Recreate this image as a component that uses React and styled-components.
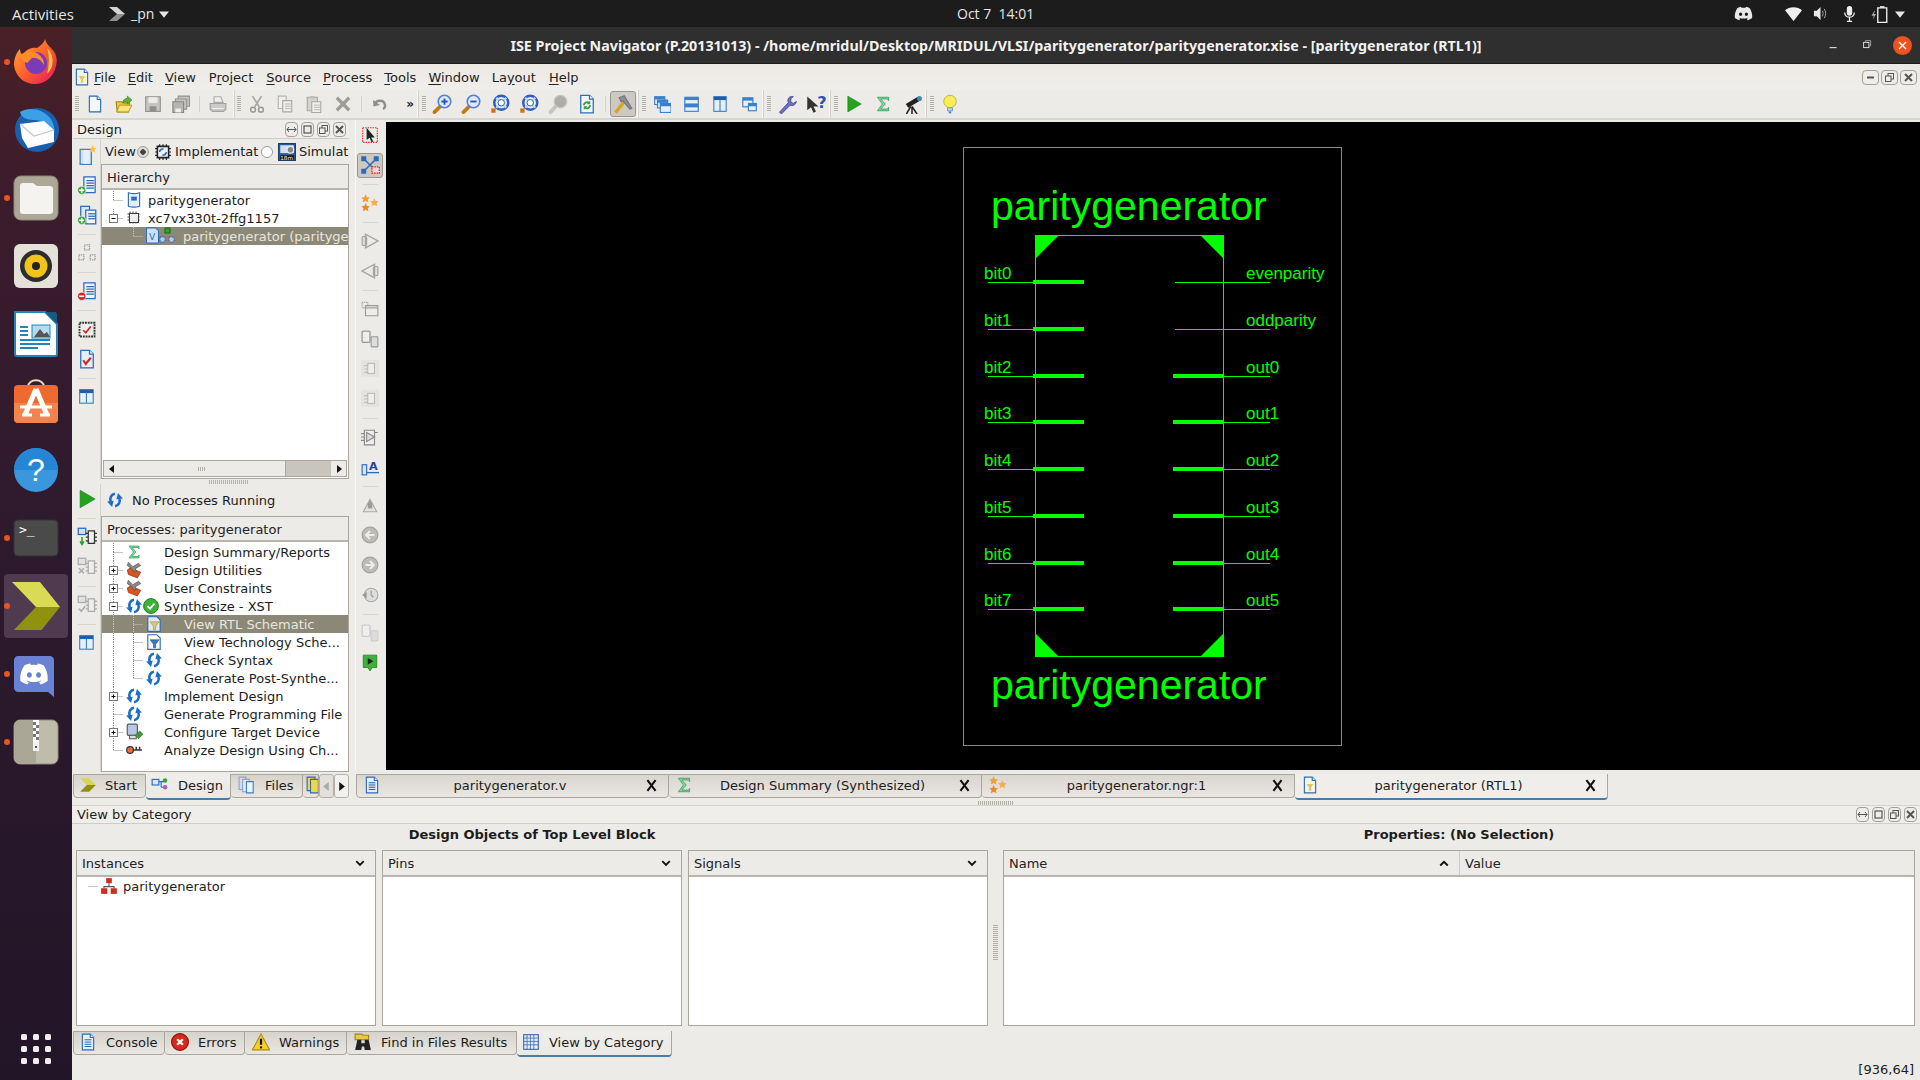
import React from 'react';
import styled, { createGlobalStyle } from 'styled-components';
import { FaDiscord } from 'react-icons/fa';

const Global = createGlobalStyle`
  html, body { margin: 0; padding: 0; background: #000; }
  * { box-sizing: border-box; }
  body { font-family: "DejaVu Sans", sans-serif; font-size: 13px; color: #1c1c1c; }
`;

const Root = styled.div`width:1920px;height:1080px;display:flex;flex-direction:column;overflow:hidden;`;
const TopBar = styled.div`height:27px;background:#1c1c1c;color:#e6e6e6;display:flex;align-items:center;font:14px "Open Sans",sans-serif;flex:none;`;
const TopLeft = styled.div`width:957px;display:flex;align-items:center;flex:none;`;
const Activities = styled.span`margin-left:12px;width:97px;font-size:15px;`;
const AppName = styled.span`margin:0 5px 0 6px;`;
const Clock = styled.span`font-size:14px;width:78px;white-space:nowrap;`;
const TopRight = styled.div`margin-left:auto;display:flex;align-items:center;`;
const TopSlot = styled.span`display:flex;justify-content:center;align-items:center;width:${p=>p.$w}px;`;
const Body = styled.div`flex:1;display:flex;min-height:0;`;
const Dock = styled.div`width:72px;flex:none;padding-top:1px;display:flex;flex-direction:column;background:linear-gradient(180deg,#4a2027 0,#3c1c2c 16%,#2f1a2e 45%,#221527 100%);`;
const DockItem = styled.div`height:68px;display:flex;align-items:center;justify-content:center;position:relative;flex:none;background-clip:content-box;
  ${p=>p.$active?'&::before{content:"";position:absolute;left:4px;right:4px;top:2px;bottom:2px;border-radius:4px;background:#4f3a4f;}':''}
  ${p=>p.$run?'&::after{content:"";position:absolute;left:4px;top:31px;width:6px;height:6px;border-radius:50%;background:#e95420;}':''}
  svg{position:relative;z-index:1;}`;
const AppGrid = styled.div`margin-top:auto;margin-bottom:16px;margin-left:21px;display:grid;grid-template-columns:repeat(3,6px);gap:6px;`;
const AppDot = styled.i`width:6px;height:6px;border-radius:1.5px;background:#eee;display:block;`;
const Main = styled.div`flex:1;min-width:0;display:flex;flex-direction:column;background:#edebe7;`;
const TitleBar = styled.div`height:37px;background:#302f2f;color:#f2f2f2;font:bold 14.3px "Noto Sans",sans-serif;display:flex;align-items:center;justify-content:center;position:relative;flex:none;border-bottom:1px solid #1d1d1d;`;
const WinButtons = styled.div`position:absolute;right:1px;top:0;height:36px;display:flex;align-items:center;`;
const WinSlot = styled.span`width:34px;display:flex;justify-content:center;`;
const MenuBar = styled.div`height:26px;flex:none;display:flex;align-items:center;padding-left:1px;background:linear-gradient(#ece9e5,#f0eeea);`;
const MenuLogo = styled.span`width:15px;display:flex;`;
const MenuItem = styled.span`padding:0 6px;white-space:nowrap;color:#222;margin-right:${p=>p.$mr||0}px;`;
const U = styled.span`text-decoration:underline;text-underline-offset:2px;`;
const MdiButtons = styled.div`margin-left:auto;display:flex;gap:2px;padding-right:3px;`;
const MiniBtn = styled.span`width:${p=>p.$w||17}px;height:${p=>p.$h||15}px;border:1px solid #a5a197;border-radius:4px;background:#efedea;display:flex;align-items:center;justify-content:center;`;
const ToolBar = styled.div`height:30px;flex:none;display:flex;align-items:stretch;border-bottom:2px solid #d8d5cf;background:#edebe7;`;
const ToolGroup = styled.div`display:flex;align-items:center;padding-left:${p=>p.$pl||3}px;border-right:${p=>p.$end?'none':'1px solid #f8f7f5'};box-shadow:${p=>p.$end?'none':'1px 0 0 #d3d0ca'};width:${p=>p.$w}px;flex:none;`;
const GripH = styled.span`width:4px;height:16px;margin-right:${p=>p.$mr||3}px;flex:none;background:repeating-linear-gradient(180deg,#b3b0a8 0 1px,transparent 1px 2px);`;
const ToolBtn = styled.span`width:${p=>p.$w||29}px;height:26px;flex:none;display:flex;align-items:center;justify-content:center;`;
const MoreBtn = styled.span`width:23px;height:26px;flex:none;display:flex;align-items:center;justify-content:flex-end;padding-right:2px;font-weight:bold;font-size:12px;`;
const ActiveBtn = styled.span`width:26px;height:26px;flex:none;display:flex;align-items:center;justify-content:center;background:#cdc9c2;border:1px solid #9b978e;border-radius:3px;`;
const SepV = styled.span`width:1px;height:16px;background:#d5d2cc;margin:0 ${p=>p.$m||4}px;flex:none;`;
const Workspace = styled.div`height:680px;flex:none;display:flex;`;
const LeftCol = styled.div`width:283px;flex:none;display:flex;flex-direction:column;padding-left:1px;`;
const DockHeader = styled.div`height:19px;flex:none;display:flex;align-items:center;padding:0 3px 0 4px;background:#f0eeea;border-bottom:1px solid #cfccc5;justify-content:space-between;margin-right:6px;`;
const HeaderBtns = styled.div`display:flex;gap:3px;`;
const PaneRow = styled.div`display:flex;height:${p=>p.$h}px;flex:none;`;
const VertTools = styled.div`width:28px;flex:none;display:flex;flex-direction:column;align-items:center;border-right:1px solid #d5d2cc;padding-top:${p=>p.$pt||0}px;`;
const VBtn = styled.span`height:${p=>p.$h||30}px;width:100%;display:flex;align-items:center;justify-content:center;flex:none;`;
const VSep = styled.span`height:1px;width:18px;background:#d8d5cf;margin:3.5px 0;flex:none;`;
const PaneBody = styled.div`width:248px;flex:none;display:flex;flex-direction:column;`;
const ViewRow = styled.div`height:25px;flex:none;display:flex;align-items:center;padding-left:4px;overflow:hidden;white-space:nowrap;`;
const Radio = styled.span`width:12px;height:12px;border-radius:50%;border:1px solid #a09c93;background:${p=>p.$on?'radial-gradient(#444 0 2.5px,#ddd 3px)':'#fff'};flex:none;margin:0 ${p=>p.$mr||5}px 0 ${p=>p.$ml||0}px;`;
const Fixed = styled.span`width:${p=>p.$w}px;flex:none;display:block;`;
const Frame = styled.div`border:1px solid #aaa69d;display:flex;flex-direction:column;flex:1;min-height:0;background:#fff;min-width:0;`;
const FrameHead = styled.div`height:${p=>p.$h||26}px;flex:none;background:#edebe7;border-bottom:2px solid #b9b5ac;display:flex;align-items:center;padding:${p=>p.$pt||0}px ${p=>p.$pr||5}px 0 5px;color:#222;`;
const TreeArea = styled.div`flex:1;min-height:0;padding-top:1px;display:flex;flex-direction:column;`;
const TreeRow = styled.div`height:18px;flex:none;display:flex;align-items:center;white-space:nowrap;overflow:hidden;background:${p=>p.$sel?'#8c8878':'transparent'};color:${p=>p.$sel?'#e9e6dd':'#1c1c1c'};`;
const IconSlot = styled.span`width:${p=>p.$w??18}px;flex:none;display:flex;align-items:center;justify-content:center;margin-right:${p=>p.$mr||0}px;`;
const ScrollBar = styled.div`height:17px;flex:none;display:flex;margin:0 1px 1px;background:#c9c5bd;border:1px solid #aaa69d;`;
const ScrollBtn = styled.span`width:15px;flex:none;background:#edebe7;display:flex;align-items:center;justify-content:center;`;
const ScrollThumb = styled.span`width:167px;flex:none;background:#edebe7;border-right:1px solid #aaa69d;display:flex;align-items:center;justify-content:center;`;
const Spacer = styled.span`flex:1;`;
const DotsH = styled.span`width:${p=>p.$w||14}px;height:4px;background:repeating-linear-gradient(90deg,#b3b0a8 0 1px,transparent 1px 2px);display:block;`;
const SplitterH = styled.div`height:5px;flex:none;display:flex;justify-content:center;align-items:center;margin-left:30px;`;
const StatusRow = styled.div`height:32px;flex:none;display:flex;align-items:center;padding-left:5px;gap:8px;`;
const TabStrip = styled.div`height:26px;flex:none;margin-top:2px;display:flex;align-items:flex-start;`;
const Tab = styled.div`height:${p=>p.$active?26:24}px;width:${p=>p.$w}px;flex:none;display:flex;align-items:center;overflow:hidden;white-space:nowrap;padding:0 0 2px ${p=>p.$pl||5}px;gap:${p=>p.$gap||10}px;position:relative;
  background:${p=>p.$active?'linear-gradient(#f0eeea,#ebe9e5)':'linear-gradient(#d6d3cd,#eae7e2)'};
  border:1px solid #aaa69d;border-top:${p=>p.$active?'none':'1px solid #aaa69d'};border-left:${p=>p.$first?'1px solid #aaa69d':'none'};border-radius:0 0 4px 4px;
  ${p=>p.$active?'border-bottom:2px solid #4a7ba5;':''}`;
const ArrowBtn = styled.span`width:15px;height:24px;flex:none;background:${p=>p.$on?'#f3f1ee':'#e3e0db'};border:1px solid #b5b1a8;border-radius:3px;display:flex;align-items:center;justify-content:center;`;
const RightCol = styled.div`flex:1;min-width:0;display:flex;flex-direction:column;`;
const EditRow = styled.div`height:650px;flex:none;display:flex;`;
const SideTools = styled.div`width:29px;flex:none;display:flex;flex-direction:column;align-items:center;border-left:1px solid #f8f7f5;`;
const SideBtn = styled.span`height:30px;width:100%;flex:none;display:flex;align-items:center;justify-content:center;`;
const SideActive = styled.span`height:25px;width:26px;margin:2.5px 0;flex:none;display:flex;align-items:center;justify-content:center;background:#cdc9c2;border:1px solid #9b978e;border-radius:3px;`;
const SideSep = styled.span`height:1px;width:16px;flex:none;background:#d8d5cf;margin:3.5px 0;`;
const Canvas = styled.div`flex:1;min-width:0;background:#000;margin:2px 0 0 2px;`;
const Schem = styled.svg`display:block;`;
const EditTabs = styled.div`height:26px;flex:none;margin-top:4px;display:flex;padding-left:1px;align-items:flex-start;`;
const EditTab = styled.div`width:313px;height:${p=>p.$active?26:24}px;flex:none;display:flex;align-items:center;padding:0 6px 2px;
  background:${p=>p.$active?'#f0eeea':'linear-gradient(#d9d6d0,#eae7e2)'};border:1px solid #aaa69d;border-left:${p=>p.$first?'1px solid #aaa69d':'none'};border-top:${p=>p.$active?'none':'1px solid #aaa69d'};border-radius:0 0 4px 4px;${p=>p.$active?'border-bottom:2px solid #4a7ba5;':''}`;
const EditLabel = styled.span`flex:1;text-align:center;padding-right:6px;`;
const CloseX = styled.span`width:14px;margin-right:3px;display:flex;`;
const Bottom = styled.div`flex:1;min-height:0;display:flex;flex-direction:column;`;
const HandleRow = styled.div`height:5px;flex:none;display:flex;justify-content:center;align-items:center;`;
const BottomHead = styled.div`height:19px;flex:none;display:flex;align-items:center;justify-content:space-between;padding:0 3px 0 5px;background:#f0eeea;border-top:1px solid #d8d5cf;border-bottom:1px solid #d0cdc6;`;
const Sections = styled.div`height:202px;flex:none;display:flex;padding:0 5px 0 4px;`;
const Section = styled.div`width:912px;flex:none;display:flex;flex-direction:column;`;
const SectionTitle = styled.div`height:26px;flex:none;font-weight:bold;text-align:center;line-height:21px;`;
const Frames = styled.div`flex:1;display:flex;gap:6px;min-height:0;`;
const GripCol = styled.div`width:15px;flex:none;display:flex;align-items:center;justify-content:center;padding-top:36px;`;
const GripV = styled.span`width:5px;height:36px;background:repeating-linear-gradient(180deg,#b3b0a8 0 1px,transparent 1px 2px);display:block;`;
const FrameHeadLabel = styled.span`flex:1;`;
const NameCol = styled.span`width:451px;flex:none;display:flex;align-items:center;justify-content:space-between;padding-right:10px;border-right:1px solid #cfccc5;height:100%;margin-right:5px;`;
const OutRow = styled.div`height:18px;display:flex;align-items:center;white-space:nowrap;`;
const OutTabs = styled.div`height:26px;margin-top:5px;flex:none;display:flex;align-items:flex-start;padding-left:1px;`;
const StatusBar = styled.div`flex:1;display:flex;align-items:center;justify-content:flex-end;padding-right:6px;padding-top:2px;`;

const Svg = ({s=16,w,h,vb="0 0 16 16",children}) => <svg width={w||s} height={h||s} viewBox={vb} style={{flex:'none',display:'block'}}>{children}</svg>;

const pageD = "M3 1h7l3 3v11H3z";
const Pg = ({f="#eef4fb",b="#2a6cb8"}) => <><path d={pageD} fill={f} stroke={b}/><path d="M10 1v3h3" fill="#fff" stroke={b}/></>;
const Lines = ({c="#2a6cb8",x=5,n=4,y=6}) => <>{Array.from({length:n}).map((_,i)=><path key={i} d={`M${x} ${y+i*2}h6`} stroke={c} strokeWidth="1"/>)}</>;

const INew = () => <Svg s={18}><Pg f="#f4f8fd"/></Svg>;
const IOpen = () => <Svg s={18}><path d="M1 6h5l1 1h6l-1 8H2z" fill="#f1c93c" stroke="#a58417"/><path d="M1.5 15L4 9h11l-3 6z" fill="#fbe479" stroke="#a58417" strokeWidth=".7"/><path d="M7 7c0-3 2-4 4-4V1l4 3.5L11 8V6C9 6 8 6 7 7z" fill="#5eb53a" stroke="#33801b" strokeWidth=".6"/></Svg>;
const ISave = () => <Svg s={18}><path d="M1.5 1.5h13v13h-13z" fill="#c6c5c1" stroke="#94938d"/><path d="M4 2h8v5H4z" fill="#eeeeec"/><path d="M5 10h6v4.5H5z" fill="#8f8e88"/></Svg>;
const ISaveAll = () => <Svg s={18}><path d="M5.5 1h10v9h-10z" fill="#c6c5c1" stroke="#94938d"/><path d="M3 3.5h10v9H3z" fill="#c6c5c1" stroke="#94938d"/><path d="M.8 6h9.5v9.5H.8z" fill="#b6b5b0" stroke="#88877f"/><path d="M3 12h5v3.5H3z" fill="#eee"/></Svg>;
const IPrint = () => <Svg s={18}><path d="M4.5 1.5h6l2 5h-8z" fill="#eee" stroke="#aaa"/><path d="M1 7.5h14v5l-2 2H3l-2-2z" fill="#cbcac6" stroke="#a2a19b"/><path d="M3 12h10" stroke="#eee"/></Svg>;
const ICut = () => <Svg s={18}><path d="M4 1l6 9.5M12 1L6 10.5" stroke="#aaa9a4" strokeWidth="1.5"/><circle cx="4.5" cy="13" r="2.2" fill="none" stroke="#9a9993" strokeWidth="1.3"/><circle cx="11.5" cy="13" r="2.2" fill="none" stroke="#9a9993" strokeWidth="1.3"/></Svg>;
const ICopy = () => <Svg s={18}><path d="M2 1h7v11H2z" fill="#f0efec" stroke="#b5b4af"/><path d="M6 5h8v10H6z" fill="#f0efec" stroke="#aaa9a4"/><Lines c="#c2c1bc" x={8} n={3} y={8}/></Svg>;
const IPaste = () => <Svg s={18}><path d="M2 2h9v12H2z" fill="#d5d4cf" stroke="#aaa9a4"/><path d="M4.5 1h4v2h-4z" fill="#bbb"/><path d="M6 6h8v9.5H6z" fill="#f0efec" stroke="#aaa9a4"/><Lines c="#c2c1bc" x={8} n={3} y={9}/></Svg>;
const IDel = () => <Svg s={18}><path d="M2.5 2.5l11 11M13.5 2.5l-11 11" stroke="#9e9d97" strokeWidth="3"/></Svg>;
const IUndo = () => <Svg s={16}><path d="M3 8c1-4 9-5 10 1 .3 2-1 3.5-2 4" fill="none" stroke="#8f8e88" strokeWidth="2.4"/><path d="M1 4l.5 6.5L8 9z" fill="#8f8e88"/></Svg>;
const IZoom = ({sign,c="#5b7fd0"}) => <Svg s={20}><path d="M7.5 9L2 14.5" stroke="#c27a17" strokeWidth="3" strokeLinecap="round"/><circle cx="10" cy="6" r="5" fill="#dfe8f8" stroke={c} strokeWidth="1.3"/>{sign==='+'&&<path d="M7.5 6h5M10 3.5v5" stroke="#2a56b0" strokeWidth="1.5"/>}{sign==='-'&&<path d="M7.5 6h5" stroke="#2a56b0" strokeWidth="1.5"/>}</Svg>;
const IRing = () => <Svg s={20}><circle cx="9" cy="7" r="5.6" fill="#e5edf9" stroke="#2f5fb8" strokeWidth="2"/><path d="M5 3l8 8M13 3l-8 8" stroke="#c5d5f2" strokeWidth="1.8"/><circle cx="9" cy="7" r="2.6" fill="#fff" stroke="#2f5fb8" strokeWidth=".8"/><path d="M1 15h3.5v-3.5H1z" fill="#d2701c"/></Svg>;
const IZoomOff = () => <Svg s={20}><path d="M7 9L2 14.5" stroke="#c6c5c0" strokeWidth="3" strokeLinecap="round"/><circle cx="10" cy="6" r="5" fill="#aeada8" stroke="#c6c5c0"/></Svg>;
const IRefreshDoc = () => <Svg s={20}><Pg f="#f4f8fd"/><path d="M5.5 9c0-2 2-3 4-2.2M10.5 9c0 2-2 3-4 2.2" fill="none" stroke="#35a435" strokeWidth="1.5"/><path d="M10.6 5.2v3h-3zM5.4 12.8v-3h3z" fill="#35a435"/></Svg>;
const IHammer = () => <Svg s={20}><path d="M2 15L9 6" stroke="#d9a520" strokeWidth="2.8"/><path d="M5 3l4-1.5 6 10-1.5 .5L8 5.5 6.5 6z" fill="#8a8fa6" stroke="#777"/></Svg>;
const Win = ({x,y,w,h}) => <><rect x={x+.5} y={y+.5} width={w} height={h} fill="#e5f0fb" stroke="#3b80c8"/><rect x={x+.5} y={y+.5} width={w} height={2.5} fill="#3b80c8"/></>;
const ICascade = () => <Svg s={18}><Win x={1} y={1} w={9} h={7}/><Win x={3.5} y={4} w={9} h={7}/><Win x={6} y={7} w={9.5} h={8}/></Svg>;
const ITileH = () => <Svg s={18}><Win x={2} y={1.5} w={12} h={6}/><Win x={2} y={8} w={12} h={6}/></Svg>;
const ITileV = () => <Svg s={18}><rect x="2.5" y="1.5" width="11" height="13" fill="#e5f0fb" stroke="#3b80c8"/><rect x="2.5" y="1.5" width="11" height="3" fill="#1f5fa8"/><path d="M8 4v11" stroke="#3b80c8"/></Svg>;
const IWinTwo = () => <Svg s={18}><Win x={2} y={2} w={9} h={8}/><Win x={7} y={7} w={7} h={6.5}/></Svg>;
const IWrench = () => <Svg s={20}><path d="M2 14.5l1.5 1.5 7-7c2 .8 4.5-.2 5-3l-2.5 1.5-2-1 0-2.5L13 2c-3-.5-5 1.5-4 5z" fill="#6f6fc8" stroke="#46468e" strokeWidth=".7"/></Svg>;
const IHelpArrow = () => <Svg s={20}><path d="M1 2v11l3-2.5 2 4.5 2-1-2-4h4z" fill="#333"/><text x="9" y="11" fontSize="13" fontWeight="bold" fontFamily="DejaVu Sans" fill="#2a56b0">?</text></Svg>;
const IPlay = ({s=18}) => <Svg s={s}><path d="M2.5 1v14l12-7z" fill="#24a31f" stroke="#17801a" strokeWidth=".5"/></Svg>;
const ISigma = ({s=18}) => <Svg s={s}><path d="M3 2h10v3l-1-1.5H6l4 4.5-4 4.5h6l1-1.5v3H3l4.5-6z" fill="#8fd6a5" stroke="#2b9d54" strokeWidth=".7"/></Svg>;
const IScope = () => <Svg s={20}><path d="M3 8l10-6 2 3-10 6z" fill="#222"/><circle cx="14" cy="3.5" r="2" fill="#3d8fc0"/><path d="M7 10l-3.5 6M8 10v6M8 10l4 6" stroke="#222" strokeWidth="1.2"/></Svg>;
const IBulb = () => <Svg s={20}><circle cx="8" cy="6" r="5" fill="#f9ec5a" stroke="#c5ba30" strokeWidth=".8"/><path d="M6 11h4v2.5H6z" fill="#d5e07a" stroke="#6d9ed0" strokeWidth=".8"/><path d="M7 14h2v1.5H7z" fill="#4c86c8"/></Svg>;
const IDocStar = () => <Svg s={20}><path d="M2.5 3.5h9v12h-9z" fill="#cfe0f4" stroke="#3b80c8"/><path d="M5 4h5v11H5z" fill="#e5eefa"/><path d="M12.5 0l.9 2.3 2.3.2-1.8 1.5.6 2.3-2-1.3-2 1.3.6-2.3-1.8-1.5 2.3-.2z" fill="#f5c542"/></Svg>;
const Plus = ({c="#35a435",m}) => <><circle cx="3.8" cy="12.2" r="3.3" fill={c} stroke="#fff" strokeWidth=".5"/><path d="M1.8 12.2h4" stroke="#fff" strokeWidth="1.3"/>{!m&&<path d="M3.8 10.2v4" stroke="#fff" strokeWidth="1.3"/>}</>;
const IDocAdd = ({c,m}) => <Svg s={20}><path d="M5.5 1.5h9v12.5h-9z" fill="#f0f5fb" stroke="#2a6cb8"/><Lines x={7.5} n={4} y={4.5}/><Plus c={c} m={m}/></Svg>;
const IDocsAdd = () => <Svg s={20}><path d="M3 1h7v11H3z" fill="#dbe7f6" stroke="#2a6cb8"/><path d="M7 4h8v11H7z" fill="#f0f5fb" stroke="#2a6cb8"/><Lines x={9} n={3} y={7}/><Plus/></Svg>;
const Chip = ({x,y,s=4,c="#999"}) => <rect x={x} y={y} width={s} height={s} fill="none" stroke={c} strokeDasharray="1 .6"/>;
const IChips = () => <Svg s={20}><Chip x={6} y={1.5}/><Chip x={1.5} y={9.5}/><Chip x={10.5} y={9.5}/></Svg>;
const IChipCheck = () => <Svg s={20}><path d="M2 3h12v11H2z" fill="#eee" stroke="#333" strokeWidth="1.5" strokeDasharray="1.5 .7"/><path d="M5 9l2 2 4-5" fill="none" stroke="#d22" strokeWidth="1.4"/></Svg>;
const IDocCheck = () => <Svg s={20}><Pg f="#e5eefa"/><path d="M5 9l2 3 4-5" fill="none" stroke="#d22" strokeWidth="1.7"/></Svg>;
const ITable = () => <Svg s={18}><rect x="1.5" y="1.5" width="12" height="12" fill="#e5f0fb" stroke="#3b80c8"/><rect x="1.5" y="1.5" width="12" height="3" fill="#1f5fa8"/><path d="M7.5 4v9" stroke="#3b80c8"/></Svg>;
const IBoardCheck = () => <Svg s={20}><rect x="1" y="1" width="6" height="5" fill="#cfe0f4" stroke="#2a6cb8"/><path d="M9 3h5v10H9z" fill="#eee" stroke="#333"/><path d="M14 5h2M14 8h2M14 11h2M7 5h2M7 8h2M7 11h2" stroke="#333"/><path d="M4 8v5M2.5 11.5L4 14l1.5-2.5" fill="none" stroke="#22a322" strokeWidth="1.2"/></Svg>;
const IBoardOff = ({k}) => <Svg s={20}><rect x="1" y="1" width="6" height="5" fill="#e2e1dd" stroke="#aaa"/><path d="M9 3h5v10H9z" fill="#eee" stroke="#aaa"/><path d="M14 5h2M14 8h2M14 11h2M7 5h2M7 8h2M7 11h2" stroke="#aaa"/>{k==='x'?<path d="M1.5 9l4 4M5.5 9l-4 4" stroke="#aaa" strokeWidth="1.3"/>:<path d="M1.5 11l2 2 3-4" fill="none" stroke="#aaa" strokeWidth="1.3"/>}</Svg>;
const ICursorSel = () => <Svg s={18}><rect x="1.5" y="1.5" width="13" height="13" fill="none" stroke="#e02020" strokeDasharray="1.2 1"/><path d="M5 1.5v11l2.6-2 1.8 4 1.5-.7-1.8-3.6h3.2z" fill="#222"/></Svg>;
const INet = () => <Svg s={20}><path d="M3 3l10 10M13 3L3 13" stroke="#2a6cb8" strokeWidth="1.2"/><path d="M1 1h4v4H1zM11 1h4v4h-4zM1 11h4v4H1z" fill="#2a6cb8"/><rect x="9.5" y="9.5" width="6" height="5" fill="#f5d6d6" stroke="#e02020" strokeDasharray="1.2 .8"/></Svg>;
const star = (x,y,s,c) => <path transform={`translate(${x} ${y}) scale(${s})`} d="M5 0l1.5 3.3 3.5.4-2.6 2.3.8 3.5L5 7.7 1.8 9.5l.8-3.5L0 3.7l3.5-.4z" fill={c}/>;
const IStars = () => <Svg s={20}>{star(1,1,.7,'#f19e2c')}{star(1,8,.7,'#f08a20')}{star(8,4,.7,'#f3b04a')}</Svg>;
const IGateR = () => <Svg s={18}><rect x="1" y="4" width="4" height="8" rx="1" fill="#ddd" stroke="#a5a49e"/><path d="M4 2l11 6-11 6z" fill="none" stroke="#a5a49e" strokeWidth="1.2"/></Svg>;
const IGateL = () => <Svg s={18}><rect x="11" y="4" width="4" height="8" rx="1" fill="#ddd" stroke="#a5a49e"/><path d="M12 2L1 8l11 6z" fill="none" stroke="#a5a49e" strokeWidth="1.2"/></Svg>;
const IChipWin = () => <Svg s={18}><path d="M1 2h5v5H1z" fill="none" stroke="#999" strokeDasharray="1 .7"/><path d="M4 5h11v9H4z" fill="#eeedea" stroke="#999"/><path d="M4 7h11" stroke="#999"/></Svg>;
const IPair = ({dark}) => <Svg s={18}><rect x="1" y="1" width={7} height={10} rx="1" fill="#eee" stroke={dark?'#999':'#ccc'} strokeWidth="1.2"/><rect x="9" y="6" width="6" height="9" rx=".5" fill="#ddd" stroke={dark?'#999':'#ccc'}/></Svg>;
const IBlockGhost = () => <Svg s={18}><rect x="0" y="0" width="16" height="15" fill="#e5e3df"/><rect x="6" y="3" width="6" height="9" fill="#efeeeb" stroke="#bbb"/><path d="M3 5h3M3 8h3M3 11h3" stroke="#bbb"/></Svg>;
const IGateDoc = () => <Svg s={18}><path d="M3 2h9v13H3z" fill="#eee" stroke="#888"/><path d="M5 4l7 4-7 4z" fill="#ddd" stroke="#888"/><path d="M0 5h3M0 8h3M0 11h3M12 4h3" stroke="#888"/></Svg>;
const ILabelA = () => <Svg s={18}><rect x="1" y="6" width="4" height="9" fill="#d5e5f6" stroke="#2a6cb8"/><path d="M5 13h11" stroke="#2a6cb8" strokeWidth="1.2"/><text x="7" y="11" fontSize="10" fontWeight="bold" fontFamily="DejaVu Sans" fill="#2a3fa0">A</text></Svg>;
const IUpGhost = () => <Svg s={18}><path d="M2 14L8 3l6 11z" fill="#e5e3df" stroke="#aaa"/><path d="M6 7l2-3 2 3v4H6z" fill="#9b9a94"/></Svg>;
const ICircArrow = ({d}) => <Svg s={18}><circle cx="8" cy="8" r="7" fill="#bdbcb7" stroke="#a3a29c"/><path d={d==='l'?"M12 8H5M8 4.5L4.5 8 8 11.5":"M4 8h7M8 4.5L11.5 8 8 11.5"} fill="none" stroke="#eee" strokeWidth="1.8"/></Svg>;
const IClockBack = () => <Svg s={18}><circle cx="9" cy="8" r="6" fill="#ddd" stroke="#aaa"/><path d="M9 4v4l2 2" stroke="#999" fill="none"/><path d="M1 8l4-3v6z" fill="#999"/></Svg>;
const IFlag = () => <Svg s={18}><path d="M2 1h12v11H10l-2 3-2-3H2z" fill="#3eb13a" stroke="#237f20" strokeWidth=".7"/><path d="M6 3.5l5 3-5 3z" fill="#222"/></Svg>;
const Sync2 = () => <><path d="M5 8c0-2 2-3 3.5-2.5M11 8c0 2-2 3-3.5 2.5" fill="none" stroke="#2a6cb8" strokeWidth="1.4"/></>;
const IChipSync = () => <Svg s={18}><path d="M3 3h10v10H3z" fill="#eef2f8" stroke="#222" strokeWidth="1.4"/><path d="M1 5h2M1 8h2M1 11h2M13 5h2M13 8h2M13 11h2M5 1v2M8 1v2M11 1v2M5 13v2M8 13v2M11 13v2" stroke="#222"/><Sync2/></Svg>;
const ISim = () => <Svg s={18}><rect x=".5" y=".5" width="15" height="15" fill="#2e5a9b" stroke="#1b3c6d"/><rect x="2" y="2" width="12" height="7" fill="#cfe0f4"/><path d="M2 11h12v4H2z" fill="#111"/><circle cx="11" cy="6" r="3" fill="#888" stroke="#eee"/><text x="2" y="15" fontSize="5" fill="#fff" fontFamily="DejaVu Sans">18m</text></Svg>;
const IVerilogBlue = () => <Svg s={18}><path d="M3 1.5c3 1 7 1 10 0v12c-3 1-7 1-10 0z" fill="#e5eefa" stroke="#2a6cb8"/><rect x="5.5" y="5" width="5" height="3.5" fill="#2a6cb8"/></Svg>;
const IChipBlack = () => <Svg s={16}><rect x="3" y="3" width="10" height="10" fill="#3a3a3a"/><path d="M1.5 4h12M1.5 7h12M1.5 10h12M4 1.5v12M7 1.5v12M10 1.5v12" stroke="#3a3a3a"/><rect x="4" y="4" width="8" height="8" fill="#eee"/></Svg>;
const IVerilogTree = () => <Svg w={34} h={18} vb="0 0 34 18"><path d="M1.5 1h9l3 3v12h-12z" fill="#d0e1f5" stroke="#2a6cb8"/><text x="4" y="13" fontSize="9" fill="#2a6cb8" fontFamily="DejaVu Sans">V</text><rect x="20" y="1" width="5" height="5" fill="#2ea32e" stroke="#0d6d0d"/><rect x="15" y="10" width="5" height="5" fill="#bcd" stroke="#2a56b0" strokeDasharray="1 .6"/><rect x="24" y="10" width="5" height="5" fill="#bcd" stroke="#2a56b0" strokeDasharray="1 .6"/></Svg>;
const SyncHalf = () => <><path d="M8 2.5C4.6 3 3 6 4.2 10" fill="none" stroke="#1c6fc4" strokeWidth="2.3"/><path d="M1 9.3l5.8-.6-1.4 5.6z" fill="#1c6fc4"/></>;
const ISync = ({s=18}) => <Svg s={s}><SyncHalf/><g transform="rotate(180 8 8)"><SyncHalf/></g></Svg>;
const ITools = () => <Svg s={18}><path d="M2 8l3-2 9 4-3 5-8-3z" fill="#d9541e" stroke="#8f2e0a" strokeWidth=".6"/><path d="M3 1l4 4 5-3 2 2-5 3 1 2-2 1-2-3-4-3z" fill="#888" stroke="#444" strokeWidth=".5"/></Svg>;
const ICheck = () => <Svg s={16}><circle cx="8" cy="8" r="7.4" fill="#3eb13a" stroke="#237f20"/><path d="M4.5 8.2l2.5 2.5 4.5-5" fill="none" stroke="#fff" strokeWidth="1.9"/></Svg>;
const IDocFunnel = ({dark}) => <Svg s={18}><path d="M2.5 1.5h8l3 3v10h-11z" fill={dark?'#fff':'#dfe9f5'} stroke="#2a6cb8"/><path d="M4.5 6h8l-3 4v3l-2 0V10z" fill={dark?'#3a78bf':'#d9c86c'} stroke={dark?'#1f4f90':'#a0933a'} strokeWidth=".5"/></Svg>;
const IConfigure = () => <Svg s={18}><rect x="2" y="1" width="9" height="10" rx="1" fill="#b9c7e6" stroke="#555"/><rect x="4" y="11" width="6" height="3" fill="#ddd" stroke="#666"/><path d="M9 11l4-4 3 3-4 4z" fill="#3f9b38" stroke="#2f6f2a" strokeWidth=".6"/></Svg>;
const IKey = () => <Svg s={18}><circle cx="4.5" cy="8" r="3" fill="#f26a3a" stroke="#333"/><path d="M7 8h8M10 5v3M13 5v3" stroke="#333" strokeWidth="1.4"/></Svg>;
const IFilesTab = () => <Svg s={18}><path d="M1 1h6v11H1z" fill="#cfe0f4" stroke="#8aa5c8"/><path d="M4 3h6v11H4z" fill="#dde9f7" stroke="#8aa5c8"/><path d="M7.5 5h6v10h-6z" fill="#eef4fb" stroke="#3b80c8"/></Svg>;
const IFlow = () => <Svg s={18}><rect x="1" y="3" width="6" height="5" fill="#dbe7f6" stroke="#2a6cb8"/><path d="M7 5h5M9 10h3M9 5v5" stroke="#2a6cb8"/><circle cx="12.5" cy="4" r="2" fill="#35a435"/><circle cx="12.5" cy="10" r="2" fill="#a060d0"/></Svg>;
const IXil = ({s=18}) => <Svg s={s}><path d="M1 2h8l6 6H7z" fill="#d6d650"/><path d="M1 14h8l6-6H7z" fill="#8f9010"/></Svg>;
const IStack = () => <Svg s={18}><path d="M1 1h7v12H1z" fill="#f3d54a" stroke="#2a6cb8"/><path d="M4 3h7v12H4z" fill="#f3d54a" stroke="#2a6cb8"/></Svg>;
const ITri = ({d,c="#111",s=9}) => <Svg s={s} vb="0 0 8 8"><path d={d==='l'?"M6 0v8L1 4z":d==='r'?"M2 0v8l5-4z":d==='d'?"M0 2h8L4 7z":"M0 6h8L4 1z"} fill={c}/></Svg>;
const IChev = ({up}) => <Svg s={10} vb="0 0 8 8"><path d={up?"M1 6l3-3 3 3":"M1 2.5l3 3 3-3"} fill="none" stroke="#111" strokeWidth="1.5"/></Svg>;
const IX = () => <Svg s={13}><path d="M3 1.5l10 13M13 1.5L3 14.5" stroke="#111" strokeWidth="2.6"/></Svg>;
const IErr = () => <Svg s={18}><circle cx="8" cy="8" r="7.5" fill="#d6281c" stroke="#8c1208"/><path d="M5.5 5.5l5 5M10.5 5.5l-5 5" stroke="#fff" strokeWidth="2"/></Svg>;
const IWarn = () => <Svg s={18}><path d="M8 .8L15.7 15H.3z" fill="#f6cf2a" stroke="#b18c10"/><path d="M8 5v5.5" stroke="#111" strokeWidth="2"/><circle cx="8" cy="12.8" r="1" fill="#111"/></Svg>;
const IDocTab = ({s=18}) => <Svg s={s}><Pg f="#e7f0fa"/><Lines n={4} y={6}/></Svg>;
const IBino = () => <Svg s={18}><path d="M1 1h6l1 1h5v4H1z" fill="#e7c94a" stroke="#a58417"/><path d="M3 6h3.5v3h3V6H13l2 9H9.5l-.5-3H7l-.5 3H1z" fill="#222"/></Svg>;
const IGridTab = () => <Svg s={18}><rect x="1.5" y="1.5" width="13" height="13" fill="#e5eefa" stroke="#3a68b5"/><path d="M1.5 4.5h13M1.5 7.5h13M1.5 10.5h13M4.5 1.5v13M7.5 1.5v13M10.5 1.5v13" stroke="#3a68b5" strokeWidth=".7"/></Svg>;
const ISchemDoc = () => <Svg s={18}><Pg f="#f6f3df"/><path d="M5 7h6l-2 3v3H7v-3z" fill="#d9c86c"/></Svg>;
const IInst = () => <Svg s={18}><rect x="5.5" y="1" width="5" height="4.5" fill="#d22a22"/><path d="M8 5.5v3M3.5 10V8.5h9V10" stroke="#555" fill="none"/><rect x="1" y="10" width="5.5" height="5" fill="#d22a22"/><rect x="9.5" y="10" width="5.5" height="5" fill="#d22a22"/></Svg>;
const MiniGlyph = ({k}) => <Svg s={11} vb="0 0 11 11">{k==='x'&&<path d="M2 2l7 7M9 2l-7 7" stroke="#555" strokeWidth="2"/>}{k==='s'&&<rect x="2" y="2" width="7" height="7" fill="none" stroke="#555" strokeWidth="1.2"/>}{k==='r'&&<><rect x="4" y="1.5" width="5.5" height="5.5" fill="none" stroke="#555"/><rect x="1.5" y="4" width="5.5" height="5.5" fill="#efedea" stroke="#555"/></>}{k==='h'&&<path d="M1 5.5h9M3 3L1 5.5 3 8M8 3l2 2.5L8 8" fill="none" stroke="#555"/>}{k==='m'&&<path d="M2 5.5h7" stroke="#555" strokeWidth="2"/>}</Svg>;

const Gutter = ({lvl=1,box,top=1,bot=1,g2last,showMain=1,stroke="#8a8a8a"}) => {
  const w = lvl===2?43:23;
  return <svg width={w} height={18} viewBox={`0 0 ${w} 18`} style={{flex:'none',display:'block'}}>
    <g transform="translate(1 0)">
    <g stroke={stroke} strokeDasharray="1 1" fill="none">
      {showMain&&top?<path d="M10.5 0V9"/>:null}
      {showMain&&bot?<path d="M10.5 9V18"/>:null}
      {lvl===1?<path d="M10.5 9.5H20"/>:null}
      {lvl===2?<><path d={g2last?"M30.5 0V9.5":"M30.5 0V18"}/><path d="M30.5 9.5H40"/></>:null}
    </g>
    {box&&<g><rect x="6.5" y="5.5" width="8" height="8" fill="#fff" stroke="#777"/><path d="M8.5 9.5h4" stroke="#000"/>{box==='+'&&<path d="M10.5 7.5v4" stroke="#000"/>}</g>}
    </g>
  </svg>;
};

const PinsL = ['bit0','bit1','bit2','bit3','bit4','bit5','bit6','bit7'];
const PinsR = ['evenparity','oddparity','out0','out1','out2','out3','out4','out5'];
const G = '#00ff00';
const Schematic = () => (
  <Schem width="1534" height="648" viewBox="386 122 1534 648">
    <rect x="963.5" y="147.5" width="378" height="598" fill="none" stroke="#8a8a8a"/>
    <rect x="1035.5" y="235.5" width="188" height="421" fill="none" stroke={G}/>
    <path d="M1035 235h24l-24 24zM1224 235h-24l24 24zM1035 657h24l-24-24zM1224 657h-24l24-24z" fill={G}/>
    <g fill={G} fontFamily="Liberation Sans" fontSize="41">
      <text x="991" y="220">paritygenerator</text>
      <text x="991" y="699">paritygenerator</text>
    </g>
    {PinsL.map((n,i)=>{const y=Math.round(282+46.75*i);return <g key={n}>
      <rect x="988" y={y} width="46" height="1" fill={G}/><rect x="1033" y={y-2} width="51" height="4" fill={G}/>
      <text x="984" y={y-3} fill={G} fontFamily="Liberation Sans" fontSize="17">{n}</text></g>;})}
    {PinsR.map((n,i)=>{const y=Math.round(282+46.75*i);return <g key={n}>
      {i<2?<rect x="1175" y={y} width="95" height="1" fill={G}/>:<><rect x="1224" y={y} width="46" height="1" fill={G}/><rect x="1173" y={y-2} width="51" height="4" fill={G}/></>}
      <text x="1246" y={y-3} fill={G} fontFamily="Liberation Sans" fontSize="17">{n}</text></g>;})}
  </Schem>
);

const DFirefox = () => <Svg s={48} vb="0 0 48 48"><defs><linearGradient id="ff" x1="0" y1="0" x2="1" y2="1"><stop offset="0" stopColor="#ffb02e"/><stop offset=".55" stopColor="#ff5a2c"/><stop offset="1" stopColor="#e0136c"/></linearGradient></defs>
  <path d="M33 1c1 4 3 6 6 9 5 5 7 11 5 18-2 10-10 18-21 18C12 46 3 38 2 27 2 21 4 15 8 11c0 3 1 5 3 6 3-6 9-8 14-7 4-3 7-5 8-9z" fill="url(#ff)"/><circle cx="24" cy="25" r="11" fill="#7b3ab8"/><path d="M8 18c4-6 13-6 18-2 4 3 6 6 6 11-3-5-7-8-12-7l-5 5c-3-2-6-3-7-7z" fill="#ff8c2a"/><path d="M35 10c4 4 7 10 5 18-1 3-3 6-5 8 2-8 3-17 0-26z" fill="#ffc93c"/></Svg>;
const DThunder = () => <Svg s={48} vb="0 0 48 48"><circle cx="25" cy="24" r="22" fill="#1a5fae"/><path d="M8 6c8-5 22-4 30 6 4 5 5 11 4 17-3-9-10-15-20-15C14 14 9 11 8 6z" fill="#3ca0e6"/><path d="M8 18l24-3 10 9 0 12-26 6-6-10z" fill="#fff"/><path d="M8 18l14 12 20-6" fill="none" stroke="#bcc8d8" strokeWidth="1.3"/></Svg>;
const DFiles = () => <Svg s={48} vb="0 0 48 48"><rect x="2" y="2" width="44" height="44" rx="7" fill="#ada798" stroke="#8c8677"/><path d="M8 12c0-2 1-3 3-3h10l4 3h13c2 0 3 1 3 3v22c0 2-1 3-3 3H11c-2 0-3-1-3-3z" fill="#f4f3ef"/></Svg>;
const DRhythm = () => <Svg s={48} vb="0 0 48 48"><rect x="2" y="2" width="44" height="44" rx="6" fill="#e4e1d8"/><circle cx="24" cy="24" r="16" fill="#2d2d2d"/><circle cx="24" cy="24" r="11.5" fill="#f2c31a"/><circle cx="24" cy="24" r="4" fill="#222"/></Svg>;
const DWriter = () => <Svg s={48} vb="0 0 48 48"><path d="M3 2h30l12 12v30c0 1-1 2-2 2H5c-1 0-2-1-2-2z" fill="#fff" stroke="#1f86bb" strokeWidth="2"/><path d="M33 2h10c1 0 2 1 2 2v10z" fill="#17597f"/><path d="M8 17h8M8 21h8M8 25h8M8 30h30M8 34h30M8 38h18" stroke="#1f86bb" strokeWidth="2"/><rect x="20" y="15" width="18" height="13" fill="#b4dbef" stroke="#1f86bb"/><path d="M22 27l6-8 4 5 3-2 3 5z" fill="#555"/></Svg>;
const DSoft = () => <Svg s={48} vb="0 0 48 48"><path d="M16 9c0-9 16-9 16 0" fill="none" stroke="#f0dcc0" strokeWidth="2"/><rect x="2" y="7" width="44" height="38" rx="4" fill="#ef6a30"/><path d="M2 25h44v16c0 2-2 4-4 4H6c-2 0-4-2-4-4z" fill="#f4834e"/><path d="M24 11L13 37M24 11l11 26" stroke="#fff" strokeWidth="5" fill="none"/><path d="M8 29h32" stroke="#fff" strokeWidth="3"/><path d="M10 37h10M28 37h10" stroke="#fff" strokeWidth="3"/></Svg>;
const DHelp = () => <Svg s={48} vb="0 0 48 48"><circle cx="24" cy="24" r="22" fill="#3a96dd"/><path d="M2 24a22 22 0 0144 0z" fill="#2686d6"/><text x="24" y="35" textAnchor="middle" fontSize="32" fontFamily="Liberation Sans" fill="#fff">?</text></Svg>;
const DTerm = () => <Svg s={48} vb="0 0 48 48"><rect x="2" y="6" width="44" height="36" rx="4" fill="#4a4a4a" stroke="#333"/><text x="7" y="20" fontSize="13" fontFamily="DejaVu Sans Mono" fill="#fff">&gt;_</text></Svg>;
const DXilinx = () => <Svg s={48} vb="0 0 48 48"><path d="M0 0h28l20 25H24z" fill="#dada55"/><path d="M0 50h28l20-25H24z" fill="#90910f"/></Svg>;
const DDiscord = () => <Svg s={48} vb="0 0 48 48"><path d="M6 6h32c2 0 4 2 4 4v37l-6-5H6c-2 0-4-2-4-4V10c0-2 2-4 4-4z" fill="#6a82d4"/><FaDiscord x="7" y="9" size="30" color="#fff"/></Svg>;
const DZip = () => <Svg s={48} vb="0 0 48 48"><rect x="2" y="2" width="44" height="44" rx="6" fill="#bfbcab" stroke="#8e8b7c"/><path d="M2 8c0-3 3-6 6-6h16v44H8c-3 0-6-3-6-6z" fill="#aba796"/><rect x="21" y="2" width="6" height="22" fill="#fff"/><path d="M21 4h3v3h-3zM24 7h3v3h-3zM21 10h3v3h-3zM24 13h3v3h-3zM21 16h3v3h-3zM24 19h3v3h-3z" fill="#777"/><rect x="21" y="24" width="6" height="9" fill="#f2f2f2"/><rect x="23" y="28" width="2" height="2" fill="#555"/></Svg>;

const Mini = ({k,w}) => <MiniBtn $w={w}><MiniGlyph k={k}/></MiniBtn>;
const Grip = ({mr}) => <GripH $mr={mr}/>;

const Row = ({g, icon, icon2, iw, iw2, sel, text}) => (
  <TreeRow $sel={sel}><Gutter {...g} stroke={sel?'#c9c6bb':'#8a8a8a'}/>
    <IconSlot $w={iw}>{icon}</IconSlot>{iw2?<IconSlot $w={iw2}>{icon2}</IconSlot>:null}
    <IconSlot $w={5}/>{text}</TreeRow>
);

export default function App(){
  return <Root><Global/>
    <TopBar>
      <TopLeft><Activities>Activities</Activities>
        <Svg w={16} h={14} vb="0 0 16 14"><path d="M0 0h8l8 7H8z" fill="#d4d4d4"/><path d="M0 14h8l8-7H8z" fill="#8d8d8d"/></Svg>
        <AppName>_pn</AppName><ITri d="d" c="#e6e6e6" s={10}/>
      </TopLeft>
      <Clock>Oct 7&nbsp;&nbsp;14:01</Clock>
      <TopRight>
        <TopSlot $w={28}><FaDiscord size={19} color="#e8e8e8"/></TopSlot>
        <TopSlot $w={28}/>
        <TopSlot $w={16}><Svg s={17}><path d="M0 5c4-4 12-4 16 0L8 15z" fill="#eee"/></Svg></TopSlot>
        <TopSlot $w={38}><Svg s={15}><path d="M1 5h3l4-4v14l-4-4H1z" fill="#e8e8e8"/><path d="M10 5c1 2 1 4 0 6M12 3c2 3 2 7 0 10" fill="none" stroke="#aaa"/></Svg></TopSlot>
        <TopSlot $w={20}><Svg s={17}><rect x="5.5" y="1" width="5" height="9" rx="2.5" fill="#eee"/><path d="M3.5 7c0 6 9 6 9 0M8 12v3M5.5 15.5h5" fill="none" stroke="#eee" strokeWidth="1.2"/></Svg></TopSlot>
        <TopSlot $w={6}/>
        <TopSlot $w={30}><Svg s={18}><path d="M3 5L0.5 9.5H2.5L1.5 13l3-5H2.5L3.5 5z" fill="#aaa"/><path d="M6 2.5h8v13H6z" fill="none" stroke="#eee" strokeWidth="1.2"/><path d="M8 1h4v1.5H8z" fill="#eee"/></Svg></TopSlot>
        <TopSlot $w={10}><ITri d="d" c="#e6e6e6" s={10}/></TopSlot>
        <TopSlot $w={15}/>
      </TopRight>
    </TopBar>
    <Body>
      <Dock>
        <DockItem $run><DFirefox/></DockItem>
        <DockItem><DThunder/></DockItem>
        <DockItem $run><DFiles/></DockItem>
        <DockItem><DRhythm/></DockItem>
        <DockItem><DWriter/></DockItem>
        <DockItem><DSoft/></DockItem>
        <DockItem><DHelp/></DockItem>
        <DockItem $run><DTerm/></DockItem>
        <DockItem $run $active><DXilinx/></DockItem>
        <DockItem $run><DDiscord/></DockItem>
        <DockItem $run><DZip/></DockItem>
        <AppGrid>{Array.from({length:9}).map((_,i)=><AppDot key={i}/>)}</AppGrid>
      </Dock>
      <Main>
        <TitleBar>ISE Project Navigator (P.20131013) - /home/mridul/Desktop/MRIDUL/VLSI/paritygenerator/paritygenerator.xise - [paritygenerator (RTL1)]
          <WinButtons>
            <WinSlot><Svg s={14}><path d="M3 11h8" stroke="#eee" strokeWidth="1.2"/></Svg></WinSlot>
            <WinSlot><Svg s={14}><rect x="3" y="5" width="6" height="6" fill="none" stroke="#eee"/><path d="M5 5V3h6v6H9" fill="none" stroke="#aaa"/></Svg></WinSlot>
            <WinSlot><Svg s={19} vb="0 0 19 19"><circle cx="9.5" cy="9.5" r="9.5" fill="#e95420"/><path d="M6 6l7 7M13 6l-7 7" stroke="#fff" strokeWidth="1.4"/></Svg></WinSlot>
          </WinButtons>
        </TitleBar>
        <MenuBar>
          <MenuLogo><ISchemDoc/></MenuLogo>
          <MenuItem><U>F</U>ile</MenuItem><MenuItem><U>E</U>dit</MenuItem><MenuItem $mr={1}><U>V</U>iew</MenuItem><MenuItem $mr={1}>P<U>r</U>oject</MenuItem><MenuItem><U>S</U>ource</MenuItem><MenuItem><U>P</U>rocess</MenuItem><MenuItem><U>T</U>ools</MenuItem><MenuItem><U>W</U>indow</MenuItem><MenuItem $mr={1}>La<U>y</U>out</MenuItem><MenuItem><U>H</U>elp</MenuItem>
          <MdiButtons><Mini k="m"/><Mini k="r"/><Mini k="x"/></MdiButtons>
        </MenuBar>
        <ToolBar>
          <ToolGroup $w={162}><Grip mr={1}/><ToolBtn><INew/></ToolBtn><ToolBtn><IOpen/></ToolBtn><ToolBtn><ISave/></ToolBtn><ToolBtn $w={28}><ISaveAll/></ToolBtn><SepV/><ToolBtn $w={27}><IPrint/></ToolBtn></ToolGroup>
          <ToolGroup $w={184}><Grip mr={1}/><ToolBtn $w={29}><ICut/></ToolBtn><ToolBtn $w={28}><ICopy/></ToolBtn><ToolBtn><IPaste/></ToolBtn><ToolBtn><IDel/></ToolBtn><SepV/><ToolBtn $w={27}><IUndo/></ToolBtn><MoreBtn>»</MoreBtn></ToolGroup>
          <ToolGroup $w={220} $pl={4}><Grip mr={1}/><ToolBtn $w={29}><IZoom sign="+"/></ToolBtn><ToolBtn><IZoom sign="-"/></ToolBtn><ToolBtn><IRing/></ToolBtn><ToolBtn><IRing/></ToolBtn><ToolBtn><IZoomOff/></ToolBtn><ToolBtn><IRefreshDoc/></ToolBtn><SepV $m={4}/><ActiveBtn><IHammer/></ActiveBtn></ToolGroup>
          <ToolGroup $w={125} $pl={4}><Grip mr={1}/><ToolBtn><ICascade/></ToolBtn><ToolBtn><ITileH/></ToolBtn><ToolBtn><ITileV/></ToolBtn><ToolBtn><IWinTwo/></ToolBtn></ToolGroup>
          <ToolGroup $w={67} $pl={4}><Grip mr={1}/><ToolBtn><IWrench/></ToolBtn><ToolBtn><IHelpArrow/></ToolBtn></ToolGroup>
          <ToolGroup $w={96} $pl={4}><Grip mr={1}/><ToolBtn><IPlay/></ToolBtn><ToolBtn><ISigma/></ToolBtn><ToolBtn><IScope/></ToolBtn></ToolGroup>
          <ToolGroup $w={50} $pl={4} $end><Grip mr={1}/><ToolBtn><IBulb/></ToolBtn></ToolGroup>
        </ToolBar>
        <Workspace>
          <LeftCol>
            <DockHeader><span>Design</span><HeaderBtns><Mini k="h" w={13}/><Mini k="s" w={13}/><Mini k="r" w={13}/><Mini k="x" w={13}/></HeaderBtns></DockHeader>
            <PaneRow $h={340}>
              <VertTools $pt={1}><VBtn><IDocStar/></VBtn><VBtn><IDocAdd/></VBtn><VBtn><IDocsAdd/></VBtn><VSep/><VBtn><IChips/></VBtn><VSep/><VBtn><IDocAdd c="#d9231c" m/></VBtn><VSep/><VBtn><IChipCheck/></VBtn><VBtn><IDocCheck/></VBtn><VSep/><VBtn><ITable/></VBtn></VertTools>
              <PaneBody>
                <ViewRow><Fixed $w={32}>View</Fixed><Radio $on/><IChipSync/><IconSlot $w={3}/><Fixed $w={82}>Implementat</Fixed><Radio $ml={4}/><ISim/><IconSlot $w={3}/><Fixed $w={48}>Simulat</Fixed></ViewRow>
                <Frame>
                  <FrameHead $h={25} $pt={2}>Hierarchy</FrameHead>
                  <TreeArea>
                    <Row g={{bot:0}} icon={<IVerilogBlue/>} text="paritygenerator"/>
                    <Row g={{box:'-',bot:0}} icon={<IChipBlack/>} text="xc7vx330t-2ffg1157"/>
                    <TreeRow $sel><Gutter lvl={2} showMain={0} g2last stroke="#c9c6bb"/><IconSlot $w={34} $mr={3}><IVerilogTree/></IconSlot><IconSlot $w={1}/>paritygenerator (parityge</TreeRow>
                  </TreeArea>
                  <ScrollBar><ScrollBtn><ITri d="l" s={8}/></ScrollBtn><ScrollThumb><DotsH $w={8}/></ScrollThumb><Spacer/><ScrollBtn><ITri d="r" s={8}/></ScrollBtn></ScrollBar>
                </Frame>
              </PaneBody>
            </PaneRow>
            <SplitterH><DotsH $w={40}/></SplitterH>
            <PaneRow $h={288}>
              <VertTools><VBtn><IPlay s={20}/></VBtn><VSep/><VBtn><IBoardCheck/></VBtn><VBtn><IBoardOff k="x"/></VBtn><VSep/><VBtn><IBoardOff k="c"/></VBtn><VSep/><VBtn><ITable/></VBtn></VertTools>
              <PaneBody>
                <StatusRow><ISync/>No Processes Running</StatusRow>
                <Frame>
                  <FrameHead $h={25} $pt={2}>Processes: paritygenerator</FrameHead>
                  <TreeArea>
                    <Row g={{top:1}} icon={<ISigma s={16}/>} iw2={16} text="Design Summary/Reports"/>
                    <Row g={{box:'+'}} icon={<ITools/>} iw2={16} text="Design Utilities"/>
                    <Row g={{box:'+'}} icon={<ITools/>} iw2={16} text="User Constraints"/>
                    <Row g={{box:'-'}} icon={<ISync/>} iw2={16} icon2={<ICheck/>} text="Synthesize - XST"/>
                    <Row g={{lvl:2}} sel icon={<IDocFunnel/>} iw2={16} text="View RTL Schematic"/>
                    <Row g={{lvl:2}} icon={<IDocFunnel dark/>} iw2={16} text="View Technology Sche..."/>
                    <Row g={{lvl:2}} icon={<ISync/>} iw2={16} text="Check Syntax"/>
                    <Row g={{lvl:2,g2last:1}} icon={<ISync/>} iw2={16} text="Generate Post-Synthe..."/>
                    <Row g={{box:'+'}} icon={<ISync/>} iw2={16} text="Implement Design"/>
                    <Row g={{}} icon={<ISync/>} iw2={16} text="Generate Programming File"/>
                    <Row g={{box:'+'}} icon={<IConfigure/>} iw2={16} text="Configure Target Device"/>
                    <Row g={{bot:0}} icon={<IKey/>} iw2={16} text="Analyze Design Using Ch..."/>
                  </TreeArea>
                </Frame>
              </PaneBody>
            </PaneRow>
            <TabStrip>
              <Tab $w={73} $first $gap={8}><IXil/>Start</Tab>
              <Tab $w={85} $active $pl={5} $gap={9}><IFlow/>Design</Tab>
              <Tab $w={72} $pl={7} $gap={9}><IFilesTab/>Files</Tab>
              <Tab $w={16} $pl={3}><IStack/></Tab>
              <ArrowBtn><ITri d="l" c="#aaa"/></ArrowBtn><ArrowBtn $on><ITri d="r"/></ArrowBtn>
            </TabStrip>
          </LeftCol>
          <RightCol>
            <EditRow>
              <SideTools>
                <SideBtn><ICursorSel/></SideBtn><SideActive><INet/></SideActive>
                <SideSep/><SideBtn><IStars/></SideBtn>
                <SideSep/><SideBtn><IGateR/></SideBtn><SideBtn><IGateL/></SideBtn>
                <SideSep/><SideBtn><IChipWin/></SideBtn><SideBtn><IPair dark/></SideBtn><SideBtn><IBlockGhost/></SideBtn><SideBtn><IBlockGhost/></SideBtn>
                <SideSep/><SideBtn><IGateDoc/></SideBtn><SideBtn><ILabelA/></SideBtn>
                <SideSep/><SideBtn><IUpGhost/></SideBtn><SideBtn><ICircArrow d="l"/></SideBtn><SideBtn><ICircArrow d="r"/></SideBtn><SideBtn><IClockBack/></SideBtn>
                <SideSep/><SideBtn><IPair/></SideBtn><SideBtn><IFlag/></SideBtn>
              </SideTools>
              <Canvas><Schematic/></Canvas>
            </EditRow>
            <EditTabs>
              <EditTab $first><IDocTab/><EditLabel>paritygenerator.v</EditLabel><CloseX><IX/></CloseX></EditTab>
              <EditTab><ISigma/><EditLabel>Design Summary (Synthesized)</EditLabel><CloseX><IX/></CloseX></EditTab>
              <EditTab><IStars/><EditLabel>paritygenerator.ngr:1</EditLabel><CloseX><IX/></CloseX></EditTab>
              <EditTab $active><ISchemDoc/><EditLabel>paritygenerator (RTL1)</EditLabel><CloseX><IX/></CloseX></EditTab>
            </EditTabs>
          </RightCol>
        </Workspace>
        <Bottom>
          <HandleRow><DotsH $w={36}/></HandleRow>
          <BottomHead><span>View by Category</span><HeaderBtns><Mini k="h" w={13}/><Mini k="s" w={13}/><Mini k="r" w={13}/><Mini k="x" w={13}/></HeaderBtns></BottomHead>
          <Sections>
            <Section>
              <SectionTitle>Design Objects of Top Level Block</SectionTitle>
              <Frames>
                <Frame><FrameHead $pr={10}><FrameHeadLabel>Instances</FrameHeadLabel><IChev/></FrameHead><OutRow><Gutter bot={0} showMain={0}/><IInst/><IconSlot $w={5}/>paritygenerator</OutRow></Frame>
                <Frame><FrameHead $pr={10}><FrameHeadLabel>Pins</FrameHeadLabel><IChev/></FrameHead></Frame>
                <Frame><FrameHead $pr={10}><FrameHeadLabel>Signals</FrameHeadLabel><IChev/></FrameHead></Frame>
              </Frames>
            </Section>
            <GripCol><GripV/></GripCol>
            <Section>
              <SectionTitle>Properties: (No Selection)</SectionTitle>
              <Frames>
                <Frame><FrameHead><NameCol>Name<IChev up/></NameCol>Value</FrameHead></Frame>
              </Frames>
            </Section>
          </Sections>
          <OutTabs>
            <Tab $w={92} $first $gap={9}><IDocTab/>Console</Tab>
            <Tab $w={80} $pl={6} $gap={9}><IErr/>Errors</Tab>
            <Tab $w={102} $pl={7} $gap={9}><IWarn/>Warnings</Tab>
            <Tab $w={170} $pl={7} $gap={9}><IBino/>Find in Files Results</Tab>
            <Tab $w={155} $active $pl={5} $gap={9}><IGridTab/>View by Category</Tab>
          </OutTabs>
          <StatusBar>[936,64]</StatusBar>
        </Bottom>
      </Main>
    </Body>
  </Root>;
}
